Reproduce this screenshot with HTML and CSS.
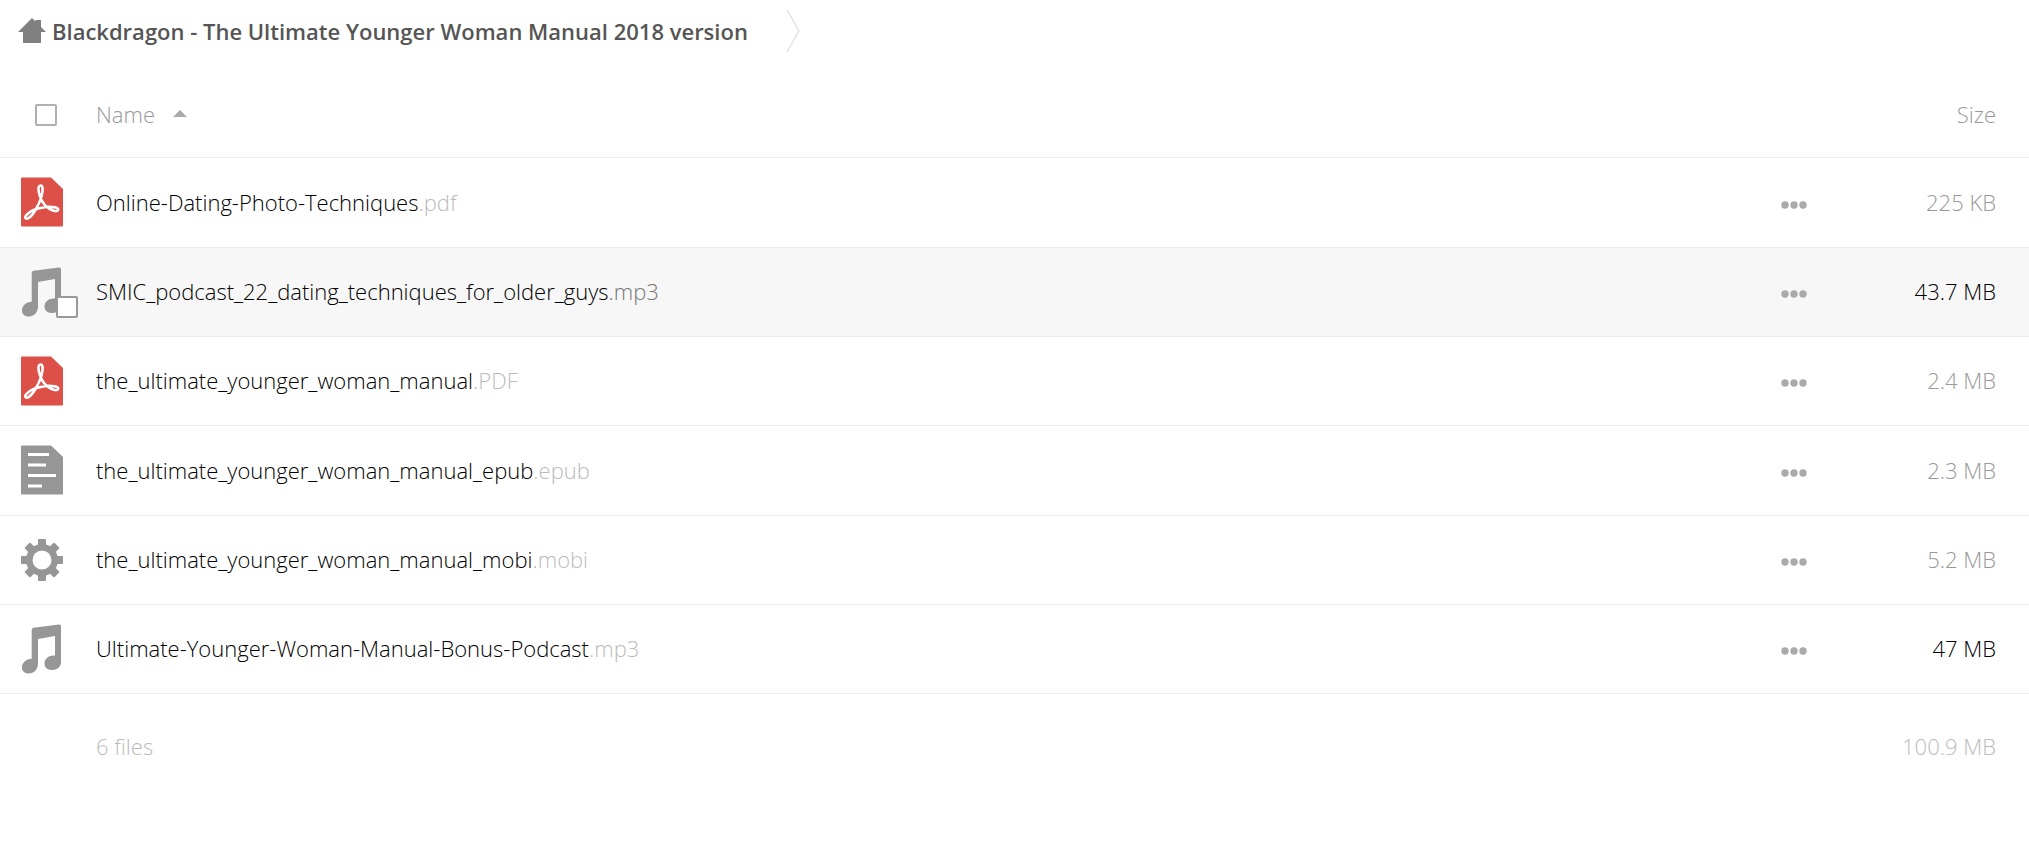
FILE: index.html
```html
<!DOCTYPE html>
<html lang="en">
<head>
    <meta charset="UTF-8">
    <meta name="viewport" content="width=device-width, initial-scale=1.0">
    <title>Files</title>
    <link rel="stylesheet" href="styles.css">
</head>
<body>
    <!-- shared icons -->
    <svg class="sprite" aria-hidden="true">
        <symbol id="icon-pdf" viewBox="0 0 42 50">
            <path fill="#dc5047" d="M1 0.500H30L42 12V48.500Q42 49.500 41 49.500H1Q0 49.500 0 48.500V1.500Q0 0.500 1 0.500Z"/>
            <path fill="none" stroke="#fff" stroke-width="2.600" stroke-linejoin="round" d="M19.500 8.500C22.500 8.500 21.800 14 20.500 19.500C18 28 12 38.500 7.500 41.200C5 42.500 3.200 41 5.200 38.200C9 33.500 17 31 25 30C31 29.500 37.500 30.500 37.200 32.700C36.500 35.500 30 33.500 26.500 30.500C22 27 19 21 17.800 15C17 11 17.500 8.500 19.500 8.500Z"/>
        </symbol>
        <symbol id="icon-audio" viewBox="0 0 42 50">
            <path fill="#969696" fill-rule="evenodd" d="M12.500 3.800L38 0.500Q40 0.300 40 2V38C40 43 36 46 31 46C26.500 46 23.500 43.500 23.500 39.500C23.500 34.500 28 31 34 31.500V12L17 15V39.500C17 45.500 13 49.500 7.500 49.500C3.500 49.500 1 47 1 43.500C1 38.500 5 35 10.700 34.700V6Q10.700 4 12.500 3.800Z"/>
        </symbol>
        <symbol id="icon-text" viewBox="0 0 42 50">
            <path fill="#969696" d="M1 0.500H30L42 12V48.500Q42 49.500 41 49.500H1Q0 49.500 0 48.500V1.500Q0 0.500 1 0.500Z"/>
            <path fill="#fff" d="M7 8H28V11H7ZM7 18.500H25V21.500H7ZM7 29H35V32H7ZM7 39.500H21V42.500H7Z"/>
        </symbol>
        <symbol id="icon-gear" viewBox="0 0 42 50">
            <g fill="#969696">
                <rect x="17" y="4" width="8" height="42" rx="1"/>
                <rect x="17" y="4" width="8" height="42" rx="1" transform="rotate(45 21 25)"/>
                <rect x="17" y="4" width="8" height="42" rx="1" transform="rotate(90 21 25)"/>
                <rect x="17" y="4" width="8" height="42" rx="1" transform="rotate(135 21 25)"/>
                <circle cx="21" cy="25" r="16"/>
            </g>
            <circle cx="21" cy="25" r="9.500" fill="#fff"/>
        </symbol>
        <symbol id="icon-dots" viewBox="0 0 26 8">
            <g fill="#aaa">
                <circle cx="4" cy="4" r="3.700"/>
                <circle cx="13" cy="4" r="3.700"/>
                <circle cx="22" cy="4" r="3.700"/>
            </g>
        </symbol>
    </svg>

    <nav class="breadcrumb">
        <a href="#" class="crumb">
            <svg class="home-icon" viewBox="0 0 28 26" aria-hidden="true">
                <path fill="#808080" d="M0 14L14 0L17.500 3.500V2H23V9L28 14H23V25H5V14Z"/>
            </svg>
            <span>Blackdragon - The Ultimate Younger Woman Manual 2018 version</span>
        </a>
        <svg class="crumb-arrow" viewBox="0 0 14 44" aria-hidden="true">
            <path fill="none" stroke="#d4d4d4" d="M1 1L13 22L1 43"/>
        </svg>
    </nav>

    <table class="files">
        <thead>
            <tr>
                <th class="col-icon"><input type="checkbox" class="check" aria-label="Select all"></th>
                <th class="col-name"><button class="sort" type="button">Name <span class="sort-arrow"></span></button></th>
                <th class="col-actions"></th>
                <th class="col-size"><button class="sort" type="button">Size</button></th>
            </tr>
        </thead>
        <tbody>
            <tr>
                <td class="col-icon"><svg class="file-icon"><use href="#icon-pdf"/></svg></td>
                <td class="col-name"><a href="#">Online-Dating-Photo-Techniques<span class="ext">.pdf</span></a></td>
                <td class="col-actions"><button class="more" type="button" aria-label="More"><svg><use href="#icon-dots"/></svg></button></td>
                <td class="col-size">225 KB</td>
            </tr>
            <tr class="active">
                <td class="col-icon">
                    <div class="thumb">
                        <svg class="file-icon"><use href="#icon-audio"/></svg>
                        <input type="checkbox" class="check row-check" aria-label="Select file">
                    </div>
                </td>
                <td class="col-name"><a href="#">SMIC_podcast_22_dating_techniques_for_older_guys<span class="ext">.mp3</span></a></td>
                <td class="col-actions"><button class="more" type="button" aria-label="More"><svg><use href="#icon-dots"/></svg></button></td>
                <td class="col-size large">43.7 MB</td>
            </tr>
            <tr>
                <td class="col-icon"><svg class="file-icon"><use href="#icon-pdf"/></svg></td>
                <td class="col-name"><a href="#">the_ultimate_younger_woman_manual<span class="ext">.PDF</span></a></td>
                <td class="col-actions"><button class="more" type="button" aria-label="More"><svg><use href="#icon-dots"/></svg></button></td>
                <td class="col-size">2.4 MB</td>
            </tr>
            <tr>
                <td class="col-icon"><svg class="file-icon"><use href="#icon-text"/></svg></td>
                <td class="col-name"><a href="#">the_ultimate_younger_woman_manual_epub<span class="ext">.epub</span></a></td>
                <td class="col-actions"><button class="more" type="button" aria-label="More"><svg><use href="#icon-dots"/></svg></button></td>
                <td class="col-size">2.3 MB</td>
            </tr>
            <tr>
                <td class="col-icon"><svg class="file-icon"><use href="#icon-gear"/></svg></td>
                <td class="col-name"><a href="#">the_ultimate_younger_woman_manual_mobi<span class="ext">.mobi</span></a></td>
                <td class="col-actions"><button class="more" type="button" aria-label="More"><svg><use href="#icon-dots"/></svg></button></td>
                <td class="col-size">5.2 MB</td>
            </tr>
            <tr>
                <td class="col-icon"><svg class="file-icon"><use href="#icon-audio"/></svg></td>
                <td class="col-name"><a href="#">Ultimate-Younger-Woman-Manual-Bonus-Podcast<span class="ext">.mp3</span></a></td>
                <td class="col-actions"><button class="more" type="button" aria-label="More"><svg><use href="#icon-dots"/></svg></button></td>
                <td class="col-size large">47 MB</td>
            </tr>
        </tbody>
        <tfoot>
            <tr>
                <td class="col-icon"></td>
                <td class="col-name">6 files</td>
                <td class="col-actions"></td>
                <td class="col-size">100.9 MB</td>
            </tr>
        </tfoot>
    </table>
</body>
</html>
```

FILE: styles.css
```css
body {
    margin: 0;
    background: #fff;
    color: #000;
    font-family: "Open Sans", sans-serif;
    font-size: 22px;
    font-weight: 300;
    line-height: 32px;
}
button {
    padding: 0;
    border: 0;
    background: none;
    font: inherit;
    color: inherit;
    cursor: pointer;
}
a {
    color: inherit;
    text-decoration: none;
}
.sprite {
    display: none;
}

/* breadcrumb */
.breadcrumb {
    display: flex;
    align-items: center;
    gap: 38px;
    height: 62px;
    padding-left: 18px;
    margin-bottom: 10px;
}
.crumb {
    display: flex;
    align-items: center;
    gap: 6px;
    color: #555;
    font-weight: 600;
}
.home-icon {
    width: 28px;
    height: 26px;
}
.crumb-arrow {
    width: 14px;
    height: 44px;
}

/* file table */
.files {
    width: 100%;
    border-collapse: separate;
    border-spacing: 0;
}
.files th,
.files td {
    box-sizing: border-box;
    height: 89px;
    padding: 0 0 2px;
    border-bottom: 1px solid #ebebeb;
    font-weight: 300;
    text-align: left;
}
.files thead th {
    height: 86px;
    color: #999;
}
.files tbody tr:nth-child(3n+1) td {
    height: 90px;
}
.files tfoot td {
    height: 106px;
    border-bottom: 0;
    color: #bbb;
}
.files .active td {
    background: #f7f7f7;
}
.files .col-icon {
    width: 96px;
    padding-bottom: 1px;
    padding-left: 21px;
}
.files thead .col-icon {
    padding-bottom: 0;
    padding-left: 35px;
}
.files .col-actions {
    width: 60px;
    padding: 4px 0 0;
}
.files .col-size {
    width: 205px;
    padding-right: 33px;
    color: #999;
    text-align: right;
}
.files .col-size.large {
    color: #000;
}
.files tfoot .col-size {
    color: #bbb;
}
.ext {
    color: #bbb;
}
.active .ext {
    color: #777;
}
.sort {
    display: inline-flex;
    align-items: center;
    gap: 18px;
}
.sort-arrow {
    border: 7px solid transparent;
    border-top: 0;
    border-bottom-color: #aaa;
}
.file-icon {
    display: block;
    width: 42px;
    height: 50px;
}
.more {
    display: block;
    margin: 0 auto;
}
.more svg {
    display: block;
    width: 26px;
    height: 8px;
}
.check {
    display: block;
    appearance: none;
    box-sizing: border-box;
    width: 22px;
    height: 22px;
    margin: 0;
    border: 2px solid #b0b0b0;
    border-radius: 2px;
    background: #fff;
}
.thumb {
    position: relative;
    width: 42px;
}
.row-check {
    position: absolute;
    right: -15px;
    bottom: -1px;
    border-color: #999;
}
```
